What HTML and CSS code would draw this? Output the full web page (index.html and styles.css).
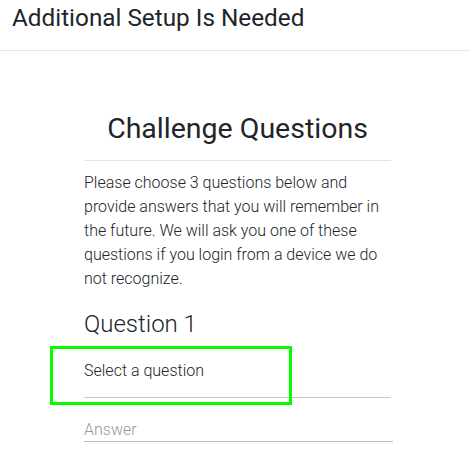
FILE: index.html
```html
<!DOCTYPE html>
<html lang="en">
<head>
<meta charset="utf-8">
<title>Additional Setup Is Needed</title>
<link rel="stylesheet" href="styles.css">
</head>
<body>
<header class="topbar">
  <h1 class="topbar-title">Additional Setup Is Needed</h1>
</header>
<main class="content">
  <h2 class="page-title">Challenge Questions</h2>
  <p class="intro">Please choose 3 questions below and provide answers that you will remember in the future. We will ask you one of these questions if you login from a device we do not recognize.</p>
  <section class="question">
    <h3 class="question-title">Question 1</h3>
    <div class="field select-field">
      <span class="select-value">Select a question</span>
      <span class="highlight"></span>
    </div>
    <div class="field answer-field">
      <span class="placeholder">Answer</span>
    </div>
  </section>
</main>
</body>
</html>
```

FILE: styles.css
```css
* { box-sizing: border-box; }
html, body { margin: 0; padding: 0; background: #fff; }
body {
  font-family: Roboto, "Liberation Sans", sans-serif;
  color: #212529;
  width: 470px;
  height: 474px;
  overflow: hidden;
}
.topbar {
  height: 51px;
  border-bottom: 1px solid #e6e6e6;
  padding: 3px 12px 0;
}
.topbar-title {
  margin: 0;
  font-size: 24.3px;
  font-weight: 400;
  line-height: 30px;
}
.content {
  padding: 60px 79px 0 84px;
}
.page-title {
  margin: 0;
  text-align: center;
  font-size: 28.5px;
  font-weight: 400;
  line-height: 36px;
  padding-bottom: 13px;
  border-bottom: 1px solid #e3e3e3;
}
.intro {
  margin: 10px 0 0;
  font-size: 16px;
  font-weight: 300;
  line-height: 24px;
}
.question-title {
  margin: 18px 0 0;
  font-size: 24px;
  font-weight: 300;
  line-height: 30px;
}
.field {
  position: relative;
  border-bottom: 1px solid #c8c8c8;
}
.select-field {
  margin-top: 13px;
  height: 46px;
  padding-top: 9px;
  font-size: 16px;
  font-weight: 300;
  line-height: 20px;
}
.highlight {
  position: absolute;
  left: -34px;
  top: -6px;
  width: 242px;
  height: 59px;
  border: 3px solid #00ff00;
}
.answer-field {
  margin-top: 23px;
  height: 21px;
  margin-right: -2px;
  font-size: 16px;
  font-weight: 300;
  line-height: 18px;
  color: #999;
  border-bottom-color: #c0c0c0;
}
```
